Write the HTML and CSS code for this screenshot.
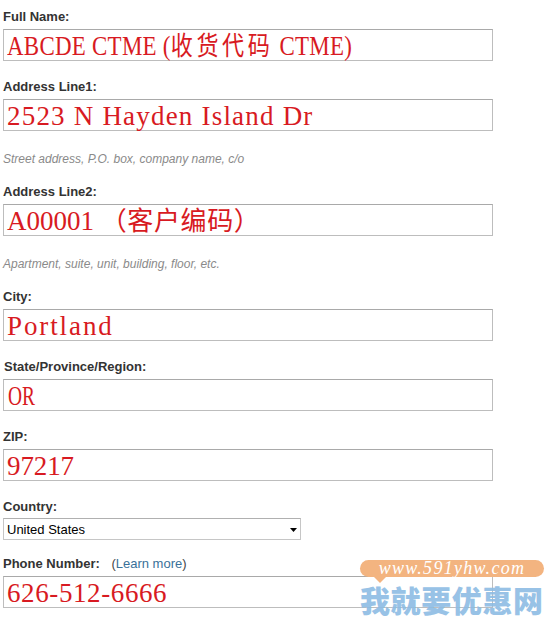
FILE: index.html
```html
<!DOCTYPE html>
<html lang="en">
<head>
<meta charset="utf-8">
<title>Address Form</title>
<link rel="stylesheet" href="styles.css">
</head>
<body>
<div class="form">
  <div class="field">
    <div class="label">Full Name:</div>
    <div class="box"><span class="val v-name">ABCDE CTME (<span class="cjk cjk-wide">收货代码</span> CTME)</span></div>
  </div>
  <div class="field">
    <div class="label">Address Line1:</div>
    <div class="box"><span class="val v-addr1">2523 N Hayden Island Dr</span></div>
    <div class="hint">Street address, P.O. box, company name, c/o</div>
  </div>
  <div class="field">
    <div class="label">Address Line2:</div>
    <div class="box"><span class="val v-addr2">A00001 <span class="cjk">（客户编码）</span></span></div>
    <div class="hint">Apartment, suite, unit, building, floor, etc.</div>
  </div>
  <div class="field">
    <div class="label">City:</div>
    <div class="box"><span class="val v-city">Portland</span></div>
  </div>
  <div class="field">
    <div class="label label-state">State/Province/Region:</div>
    <div class="box"><span class="val v-state">OR</span></div>
  </div>
  <div class="field">
    <div class="label">ZIP:</div>
    <div class="box"><span class="val v-zip">97217</span></div>
  </div>
  <div class="field field-country">
    <div class="label label-country">Country:</div>
    <div class="select">
      <span class="select-text">United States</span>
      <svg class="arrow" width="7" height="4" viewBox="0 0 7 4"><path d="M0 0 H7 L3.5 4 Z" fill="#000"/></svg>
    </div>
  </div>
  <div class="field">
    <div class="label">Phone Number: <span class="learn">(<span class="learn-link">Learn more</span>)</span></div>
    <div class="box"><span class="val v-phone">626-512-6666</span></div>
  </div>
</div>

<div class="watermark">
  <div class="wm-pill">www.591yhw.com</div>
  <div class="wm-text">我就要优惠网</div>
</div>
</body>
</html>
```

FILE: styles.css
```css
html, body {
  margin: 0;
  padding: 0;
  background: #ffffff;
}

body {
  font-family: "Liberation Sans", Arial, sans-serif;
  color: #333333;
  width: 558px;
  height: 623px;
  overflow: hidden;
  position: relative;
}

.form {
  padding: 9px 0 0 3px;
  width: 490px;
}

.field {
  margin-bottom: 18px;
}

.field-country {
  margin-bottom: 16px;
}

.label {
  font-size: 13px;
  font-weight: bold;
  line-height: 16px;
  margin-bottom: 4px;
  color: #333333;
  white-space: pre;
}

.label-state {
  padding-left: 1px;
}

.label-country {
  margin-bottom: 3px;
}

.learn {
  font-weight: normal;
  color: #444444;
  margin-left: 8px;
}

.learn-link {
  color: #3a7199;
}

.box {
  box-sizing: border-box;
  height: 32px;
  width: 490px;
  border: 1px solid #bdbdbd;
  border-top-color: #a9a9a9;
  padding: 2px 3px 0;
  line-height: 28px;
  white-space: pre;
}

.val {
  font-family: "Liberation Serif", "Times New Roman", serif;
  font-size: 27px;
  color: #d81a22;
}

.cjk {
  font-family: "Noto Sans CJK SC", sans-serif;
  font-size: 26px;
  line-height: 20px;
  letter-spacing: 0.6px;
}

.v-name {
  display: inline-block;
  transform: scaleX(0.85);
  transform-origin: left center;
  letter-spacing: 0.3px;
}

.cjk-wide {
  letter-spacing: 4.2px;
}

.v-addr1 { letter-spacing: 1.2px; }
.v-addr2 { letter-spacing: 0; }
.v-city { letter-spacing: 1.9px; }
.v-state {
  display: inline-block;
  transform: scaleX(0.72);
  transform-origin: left center;
  margin-left: 1px;
}
.v-zip { letter-spacing: -0.1px; }
.v-phone { letter-spacing: 0.6px; }

.hint {
  font-size: 12px;
  font-style: italic;
  line-height: 14px;
  color: #8a8a8a;
  margin-top: 21px;
  margin-bottom: 1px;
}

.select {
  box-sizing: border-box;
  width: 298px;
  height: 22px;
  border: 1px solid #c6c6c6;
  border-top-color: #b0b0b0;
  display: flex;
  align-items: center;
  justify-content: space-between;
  padding: 0 3px 0 3px;
  font-size: 13px;
  line-height: 15px;
  color: #000000;
}

.arrow {
  display: block;
  margin-top: 1px;
}

.watermark {
  position: absolute;
  left: 360px;
  top: 560px;
  width: 184px;
}

.wm-pill {
  position: relative;
  height: 17px;
  border-radius: 9px;
  background: #f3b480;
  color: #ffffff;
  font-family: "Liberation Serif", serif;
  font-style: italic;
  font-size: 18px;
  line-height: 17px;
  letter-spacing: 1.3px;
  text-align: center;
}

.wm-pill::after {
  content: "";
  position: absolute;
  left: 14px;
  bottom: -6px;
  border-left: 6px solid transparent;
  border-right: 6px solid transparent;
  border-top: 6px solid #f3b480;
}

.wm-text {
  margin-top: 7px;
  font-family: "Noto Sans CJK SC", sans-serif;
  font-weight: 900;
  font-size: 30px;
  line-height: 30px;
  letter-spacing: 0.6px;
  color: #8dbce4;
  opacity: 0.9;
  white-space: nowrap;
}
```
